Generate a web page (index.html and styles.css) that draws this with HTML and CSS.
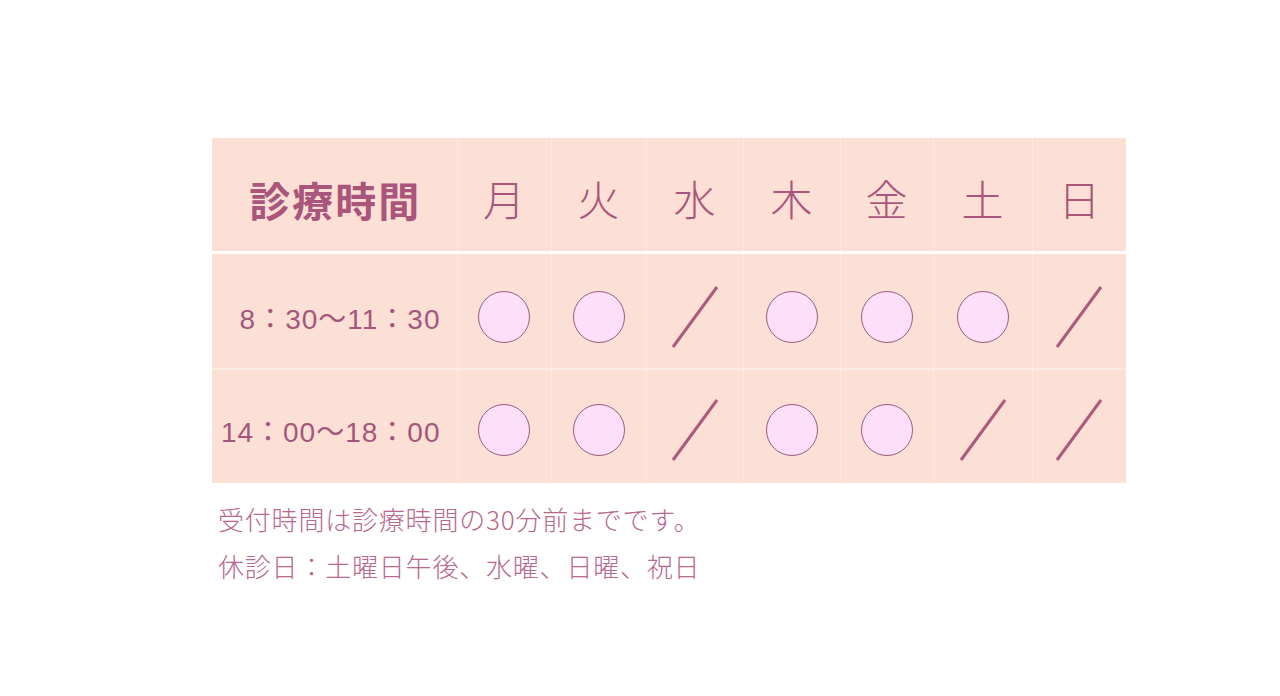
FILE: index.html
```html
<!DOCTYPE html>
<html lang="ja">
<head>
<meta charset="utf-8">
<link rel="stylesheet" href="styles.css">
</head>
<body>
<main class="page">
  <table class="schedule">
    <colgroup>
      <col class="c-time"><col class="c94"><col class="c95"><col class="c97"><col class="c97"><col class="c93"><col class="c99"><col class="c94">
    </colgroup>
    <thead>
      <tr>
        <th class="title">診療時間</th>
        <th>月</th><th>火</th><th>水</th><th>木</th><th>金</th><th>土</th><th>日</th>
      </tr>
    </thead>
    <tbody>
      <tr class="r1">
        <td class="time">8：30〜11：30</td>
        <td><svg class="open" viewBox="0 0 54 54"><circle cx="27" cy="27" r="25.5"/></svg></td>
        <td><svg class="open" viewBox="0 0 54 54"><circle cx="27" cy="27" r="25.5"/></svg></td>
        <td><svg class="closed" viewBox="0 0 48 64"><line x1="2" y1="62" x2="46" y2="2"/></svg></td>
        <td><svg class="open" viewBox="0 0 54 54"><circle cx="27" cy="27" r="25.5"/></svg></td>
        <td><svg class="open" viewBox="0 0 54 54"><circle cx="27" cy="27" r="25.5"/></svg></td>
        <td><svg class="open" viewBox="0 0 54 54"><circle cx="27" cy="27" r="25.5"/></svg></td>
        <td><svg class="closed" viewBox="0 0 48 64"><line x1="2" y1="62" x2="46" y2="2"/></svg></td>
      </tr>
      <tr class="r2">
        <td class="time">14：00〜18：00</td>
        <td><svg class="open" viewBox="0 0 54 54"><circle cx="27" cy="27" r="25.5"/></svg></td>
        <td><svg class="open" viewBox="0 0 54 54"><circle cx="27" cy="27" r="25.5"/></svg></td>
        <td><svg class="closed" viewBox="0 0 48 64"><line x1="2" y1="62" x2="46" y2="2"/></svg></td>
        <td><svg class="open" viewBox="0 0 54 54"><circle cx="27" cy="27" r="25.5"/></svg></td>
        <td><svg class="open" viewBox="0 0 54 54"><circle cx="27" cy="27" r="25.5"/></svg></td>
        <td><svg class="closed" viewBox="0 0 48 64"><line x1="2" y1="62" x2="46" y2="2"/></svg></td>
        <td><svg class="closed" viewBox="0 0 48 64"><line x1="2" y1="62" x2="46" y2="2"/></svg></td>
      </tr>
    </tbody>
  </table>
  <div class="notes">
    <p>受付時間は診療時間の30分前までです。</p>
    <p>休診日：土曜日午後、水曜、日曜、祝日</p>
  </div>
</main>
</body>
</html>
```
FILE: styles.css
```css
* { box-sizing: border-box; }
html, body { margin: 0; padding: 0; background: #ffffff; }
body {
  font-family: "Noto Sans CJK JP", "Noto Sans", sans-serif;
  color: #a5567b;
}
.page {
  padding: 138px 0 0 212px;
}
.schedule {
  border-collapse: collapse;
  table-layout: fixed;
  width: 914px;
  background: #fde0d5;
}
.c-time { width: 245px; }
.c94 { width: 94px; }
.c95 { width: 95px; }
.c97 { width: 97px; }
.c93 { width: 93px; }
.c99 { width: 99px; }

.schedule th, .schedule td {
  padding: 0;
  text-align: center;
  vertical-align: middle;
  border-left: 1px solid #fcebe5;
  border-top: 1px solid #fcebe5;
}
.schedule tr > :first-child { border-left: none; }
.schedule thead th {
  height: 114px;
  border-top: none;
  border-bottom: 3px solid #ffffff;
  font-size: 42px;
  font-weight: 300;
  line-height: 1;
  color: #a9557c;
  padding-top: 8px;
}
.schedule thead th.title {
  font-size: 41px;
  font-weight: 700;
  letter-spacing: 2px;
  padding-left: 2px;
  padding-top: 10px;
}
.schedule tbody tr.r1 td { height: 117px; border-top: none; padding-top: 13px; }
.schedule tbody tr.r2 td { height: 114px; border-top: 2px solid #fcebe5; padding-top: 6px; }
.schedule td.time {
  text-align: right;
  padding-right: 16px;
  font-family: "Liberation Sans", "Noto Sans CJK JP", sans-serif;
  font-size: 28px;
  color: #a5567b;
  letter-spacing: 1px;
}
.open {
  display: block;
  width: 54px;
  height: 54px;
  margin: 0 auto;
}
.open circle {
  fill: #fddff9;
  stroke: #9d5a82;
  stroke-width: 1;
}
.closed {
  display: block;
  width: 48px;
  height: 64px;
  margin: 0 auto;
}
.closed line {
  stroke: #ab5b7d;
  stroke-width: 3;
  stroke-linecap: butt;
}
.notes {
  padding: 12px 0 0 6px;
  color: #b7698e;
  font-size: 26px;
  font-weight: 300;
  letter-spacing: 0.8px;
}
.notes p {
  margin: 0;
  line-height: 47px;
}
```
